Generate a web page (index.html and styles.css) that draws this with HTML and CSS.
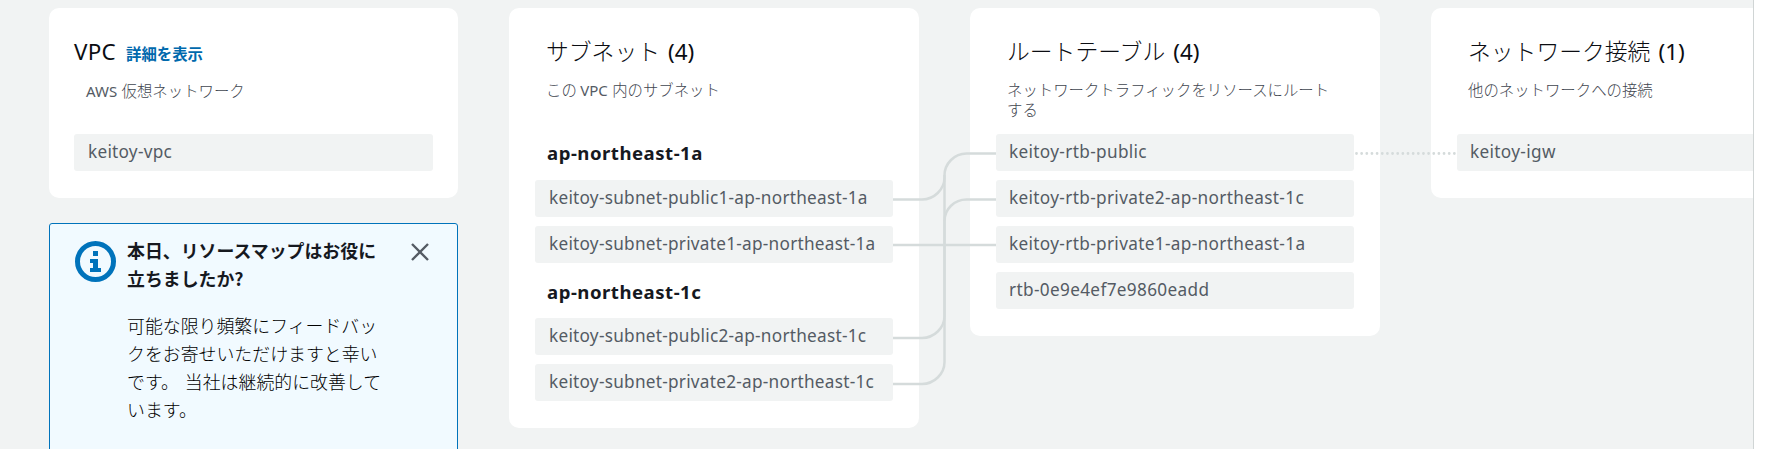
FILE: index.html
```html
<!DOCTYPE html>
<html lang="ja">
<head>
<meta charset="utf-8">
<title>リソースマップ</title>
<link rel="stylesheet" href="styles.css">
</head>
<body>
<main class="map">
  <div class="column">
    <section class="card">
      <header class="card-header">
        <h2 class="title title-vpc"><span class="latin">VPC</span><a class="details">詳細を表示</a></h2>
        <p class="subtitle"><span class="latin">AWS</span> 仮想ネットワーク</p>
      </header>
      <div class="item">keitoy-vpc</div>
    </section>
    <section class="notice">
      <svg class="info-icon" viewBox="0 0 41 41">
        <circle cx="20.5" cy="20.5" r="18" fill="none" stroke="#0073bb" stroke-width="5"/>
        <path fill="#0073bb" d="M18 10h5v5h-5zM15 18h8v9h3v4H15v-4h3v-5h-3z"/>
      </svg>
      <div class="notice-text">
        <h3 class="notice-title">本日、リソースマップはお役に<br>立ちましたか?</h3>
        <p class="notice-body">可能な限り頻繁にフィードバッ<br>クをお寄せいただけますと幸い<br>です。 当社は継続的に改善して<br>います。</p>
      </div>
      <svg class="close-icon" viewBox="0 0 18 18"><path d="M1 1l16 16M17 1L1 17" fill="none" stroke="#545b64" stroke-width="2.4"/></svg>
    </section>
  </div>
  <section class="card">
    <header class="card-header">
      <h2 class="title">サブネット <span class="latin">(4)</span></h2>
      <p class="subtitle">この <span class="latin">VPC</span> 内のサブネット</p>
    </header>
    <h3 class="zone">ap-northeast-1a</h3>
    <div class="items">
      <div class="item">keitoy-subnet-public1-ap-northeast-1a</div>
      <div class="item">keitoy-subnet-private1-ap-northeast-1a</div>
    </div>
    <h3 class="zone zone-next">ap-northeast-1c</h3>
    <div class="items">
      <div class="item">keitoy-subnet-public2-ap-northeast-1c</div>
      <div class="item">keitoy-subnet-private2-ap-northeast-1c</div>
    </div>
  </section>
  <section class="card card-tight">
    <header class="card-header">
      <h2 class="title">ルートテーブル <span class="latin">(4)</span></h2>
      <p class="subtitle">ネットワークトラフィックをリソースにルート<br>する</p>
    </header>
    <div class="items">
      <div class="item">keitoy-rtb-public</div>
      <div class="item">keitoy-rtb-private2-ap-northeast-1c</div>
      <div class="item">keitoy-rtb-private1-ap-northeast-1a</div>
      <div class="item">rtb-0e9e4ef7e9860eadd</div>
    </div>
  </section>
  <section class="card card-tight">
    <header class="card-header">
      <h2 class="title">ネットワーク接続 <span class="latin">(1)</span></h2>
      <p class="subtitle">他のネットワークへの接続</p>
    </header>
    <div class="item">keitoy-igw</div>
  </section>
  <svg class="links" viewBox="0 0 1753 449">
    <g fill="none" stroke="#d5dbdb" stroke-width="2.5">
      <path d="M893 199.5h29c12 0 22.500-10 22.500-22v-2c0-12 10-22 22-22h29.500"/>
      <path d="M893 245h103"/>
      <path d="M893 338h29c12 0 22.500-10 22.500-22V175"/>
      <path d="M893 384h29c12 0 22.500-10 22.500-22V221c0-12 10-21.500 22-21.500h29.500"/>
      <path d="M1356.500 153.500h99" stroke-linecap="round" stroke-dasharray="0 5.150" stroke-width="2.800"/>
    </g>
  </svg>
</main>
</body>
</html>
```
FILE: styles.css
```css
* { box-sizing: border-box; }

body {
  margin: 0;
  background: #fff;
  font-family: "Noto Sans", "Noto Sans CJK JP", sans-serif;
  color: #16191f;
}

h2, h3, p { margin: 0; }

.map {
  position: relative;
  display: grid;
  grid-template-columns: 409px 410px 410px 410px;
  column-gap: 51px;
  align-items: start;
  width: 1754px;
  height: 449px;
  padding: 8px 0 0 49px;
  overflow: hidden;
  background: #f1f3f3;
  border-right: 1px solid #d0d5d5;
}

.column {
  display: flex;
  flex-direction: column;
  gap: 25px;
}

.card {
  padding: 0 26px 27px;
  border-radius: 10px;
  background: #fff;
}

.column .card { padding-left: 25px; padding-right: 25px; }

.card-header {
  height: 126px;
  padding: 26px 0 0 11px;
}

.column .card-header { padding-left: 12px; }

.title {
  color: #0b0d12;
  font-family: "Noto Sans CJK JP", sans-serif;
  font-size: 22.8px;
  font-weight: 300;
  line-height: 34px;
  white-space: nowrap;
}

.latin { font-family: "Noto Sans", sans-serif; font-weight: 400; }

.title .latin { margin-left: 3px; font-size: 22.4px; }

.title-vpc { margin-left: -12px; }

.title-vpc .latin { margin-left: 0; letter-spacing: 0.3px; }

.details {
  margin-left: 10px;
  color: #0069ad;
  font-size: 15.4px;
  font-weight: 700;
}

.subtitle {
  margin-top: 10px;
  color: #3f464f;
  font-family: "Noto Sans CJK JP", sans-serif;
  font-size: 15.4px;
  font-weight: 300;
  line-height: 20px;
  white-space: nowrap;
}

.subtitle .latin { margin-right: 1px; color: #545b64; font-size: 15px; }

.card-tight .card-header { padding-left: 11px; }

.items {
  display: flex;
  flex-direction: column;
  gap: 9px;
}

.item {
  height: 37px;
  padding-left: 14px;
  border-radius: 3px;
  background: #f1f3f3;
  color: #545b64;
  font-size: 17.2px;
  letter-spacing: 0.26px;
  line-height: 36px;
  white-space: nowrap;
}

.card-tight .item { padding-left: 13px; letter-spacing: 0.34px; }

.zone {
  height: 46px;
  padding-left: 12px;
  font-size: 18.6px;
  font-weight: 700;
  letter-spacing: 0.5px;
  line-height: 37px;
}

.zone-next { height: 55px; line-height: 57px; }

.notice {
  display: flex;
  align-items: flex-start;
  height: 260px;
  padding: 12px 28px 0 25px;
  border: 1px solid #0073bb;
  border-radius: 3px;
  background: #f1faff;
  font-family: "Noto Sans CJK JP", sans-serif;
}

.info-icon { width: 41px; height: 41px; margin-top: 5px; }

.notice-text { flex: 1; margin-left: 11px; white-space: nowrap; }

.notice-title, .notice-body {
  font-size: 17.9px;
  line-height: 28px;
}

.notice-title { font-weight: 700; }
.notice-body { margin-top: 19px; color: #000; font-weight: 300; word-spacing: 2px; }

.close-icon { width: 18px; height: 18px; margin-top: 7px; }

.links {
  position: absolute;
  top: 0;
  left: 0;
  width: 1753px;
  height: 449px;
}
```
